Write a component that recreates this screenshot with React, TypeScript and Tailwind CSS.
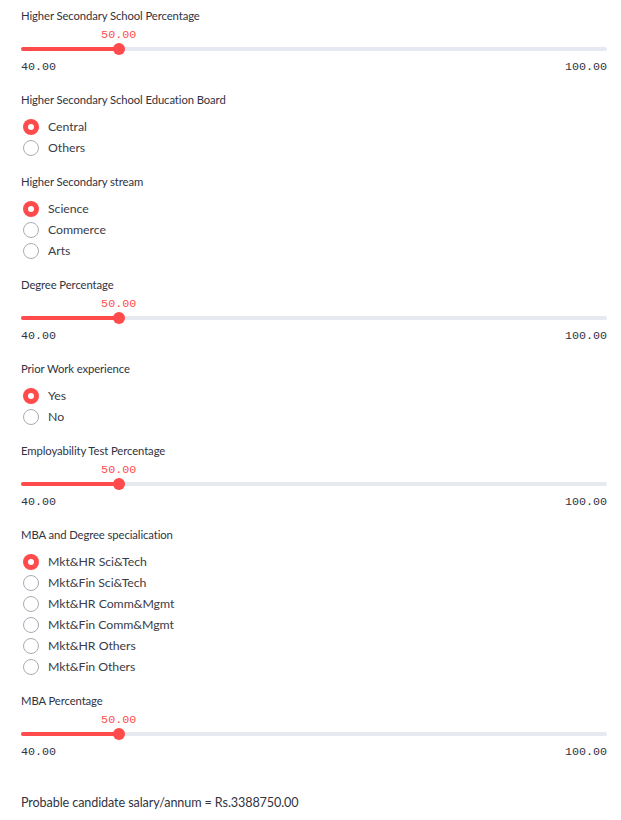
import React from 'react';

const sans = { fontFamily: 'Lato, "Open Sans", sans-serif' };

type SliderProps = { label: string; value: number; min: number; max: number };

const Slider: React.FC<SliderProps> = ({ label, value, min, max }) => {
  const pct = ((value - min) / (max - min)) * 100;
  return (
    <div className="flex flex-col">
      <div className="h-[16px] text-[11.3px] leading-[16px] tracking-[-0.1px] text-[#31333f]">{label}</div>
      <div className="relative mt-[3px] h-[17px]">
        <span
          className="absolute top-0 -translate-x-1/2 font-['Liberation_Mono',monospace] text-[11.7px] leading-[16px] text-[#ff4b4b]"
          style={{ left: `${pct}%` }}
        >
          {value.toFixed(2)}
        </span>
      </div>
      <div className="relative flex h-[10px] items-center">
        <div className="h-[4px] w-full rounded-full bg-[#e6e9ef]" />
        <div className="absolute left-0 h-[4px] rounded-full bg-[#ff4b4b]" style={{ width: `${pct}%` }} />
        <div
          className="absolute h-[12px] w-[12px] -translate-x-1/2 rounded-full bg-[#ff4b4b]"
          style={{ left: `${pct}%` }}
        />
      </div>
      <div className="mt-[5px] flex h-[16px] justify-between font-['Liberation_Mono',monospace] text-[11.7px] leading-[16px] text-[#31333f]">
        <span>{min.toFixed(2)}</span>
        <span>{max.toFixed(2)}</span>
      </div>
      <div className="h-[17px]" />
    </div>
  );
};

type RadioProps = { label: string; options: string[]; selected: number };

const RadioGroup: React.FC<RadioProps> = ({ label, options, selected }) => (
  <div className="flex flex-col">
    <div className="h-[16px] text-[11.3px] leading-[16px] tracking-[-0.1px] text-[#31333f]">{label}</div>
    <div className="mt-[8px] flex flex-col">
      {options.map((opt, i) => (
        <div key={opt} className="flex h-[21px] items-center">
          {i === selected ? (
            <span className="ml-[2px] flex h-[16px] w-[16px] items-center justify-center rounded-full bg-[#ff4b4b]">
              <span className="h-[6px] w-[6px] rounded-full bg-white" />
            </span>
          ) : (
            <span className="ml-[2px] h-[16px] w-[16px] rounded-full border-[1.5px] border-[#a9acb6] bg-white" />
          )}
          <span className="ml-[9px] text-[12.3px] leading-[21px] tracking-[-0.05px] text-[#3a3c47]">{opt}</span>
        </div>
      ))}
    </div>
    <div className="h-[16px]" />
  </div>
);

export default function App() {
  return (
    <div className="min-h-[820px] w-[621px] bg-white pl-[21px] pr-[14px] pt-[8px]" style={sans}>
      <Slider label="Higher Secondary School Percentage" value={50} min={40} max={100} />
      <RadioGroup label="Higher Secondary School Education Board" options={['Central', 'Others']} selected={0} />
      <RadioGroup label="Higher Secondary stream" options={['Science', 'Commerce', 'Arts']} selected={0} />
      <Slider label="Degree Percentage" value={50} min={40} max={100} />
      <RadioGroup label="Prior Work experience" options={['Yes', 'No']} selected={0} />
      <Slider label="Employability Test Percentage" value={50} min={40} max={100} />
      <RadioGroup
        label="MBA and Degree specialication"
        options={[
          'Mkt&HR Sci&Tech',
          'Mkt&Fin Sci&Tech',
          'Mkt&HR Comm&Mgmt',
          'Mkt&Fin Comm&Mgmt',
          'Mkt&HR Others',
          'Mkt&Fin Others',
        ]}
        selected={0}
      />
      <Slider label="MBA Percentage" value={50} min={40} max={100} />
      <div className="mt-[16px] text-[12.6px] leading-[20px] tracking-[-0.1px] text-[#31333f]">
        Probable candidate salary/annum = Rs.3388750.00
      </div>
    </div>
  );
}
